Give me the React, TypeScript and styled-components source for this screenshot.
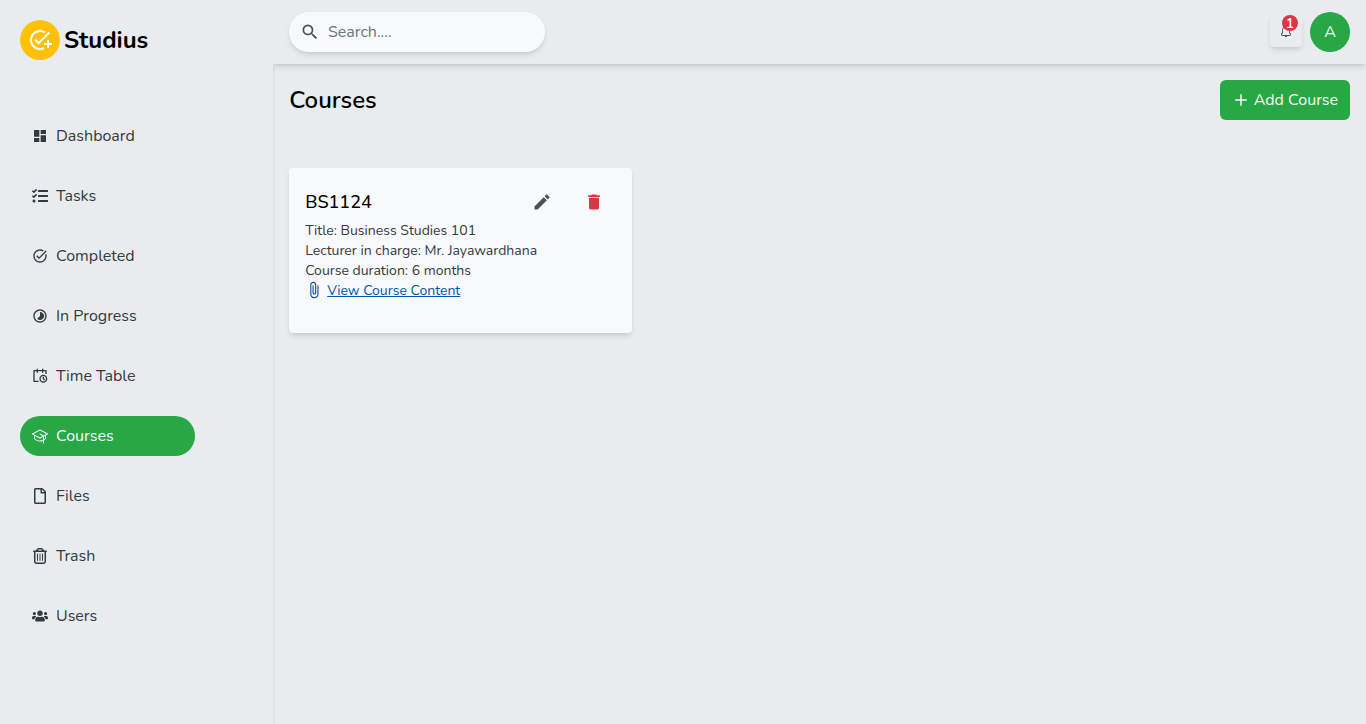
import React from "react";
import styled, { createGlobalStyle } from "styled-components";
import { MdOutlineAddTask, MdTaskAlt, MdTimelapse, MdAttachFile, MdDashboard, MdSearch, MdEdit, MdDelete } from "react-icons/md";
import { FaTasks, FaUsers, FaRegFile } from "react-icons/fa";
import { FaRegTrashCan } from "react-icons/fa6";
import { RiCalendarScheduleLine } from "react-icons/ri";
import { PiGraduationCap } from "react-icons/pi";
import { CiBellOn } from "react-icons/ci";
import { FiPlus } from "react-icons/fi";

const color = {
  surface: "#e9ecef",
  card: "#f8f9fa",
  text: "#343a40",
  muted: "#6c757d",
  green: "#28a745",
  red: "#dc3545",
  yellow: "#ffc107",
  link: "#0056b3",
};

const shadow = "0 4px 6px -1px rgba(0, 0, 0, 0.1), 0 2px 4px -2px rgba(0, 0, 0, 0.1)";

const GlobalStyle = createGlobalStyle`
  *, *::before, *::after { box-sizing: border-box; }
  body {
    margin: 0;
    background: ${color.surface};
    color: ${color.text};
    font-family: Nunito, Lato, sans-serif;
    font-size: 16px;
    line-height: 24px;
  }
  button, input { font: inherit; border: 0; padding: 0; background: none; }
  svg { display: block; flex: none; }
`;

const Page = styled.div`
  display: grid;
  grid-template-columns: 20% 1fr;
  height: 724px;
  overflow: hidden;
`;

const Sidebar = styled.aside`
  position: relative;
  padding: 20px;
  background: ${color.surface};
  box-shadow: ${shadow};
`;

const Brand = styled.div`
  display: flex;
  align-items: center;
  gap: 4px;
  height: 40px;
`;

const BrandMark = styled.div`
  display: grid;
  place-items: center;
  width: 40px;
  height: 40px;
  border-radius: 50%;
  background: ${color.yellow};
  color: #fff;
`;

const BrandName = styled.span`
  color: #000;
  font-size: 24px;
  font-weight: 700;
  line-height: 32px;
`;

const Menu = styled.nav`
  display: flex;
  flex-direction: column;
  gap: 20px;
  width: 175px;
  margin-top: 56px;
`;

const MenuItem = styled.a<{ $active?: boolean }>`
  display: flex;
  align-items: center;
  gap: 8px;
  height: 40px;
  padding: 0 12px;
  border-radius: 20px;
  background: ${(p) => (p.$active ? color.green : "transparent")};
  color: ${(p) => (p.$active ? color.card : color.text)};
`;

const Main = styled.div`
  position: relative;
  display: flex;
  flex-direction: column;
  min-width: 0;
  overflow: hidden;
  z-index: 0;
`;

const Header = styled.header`
  position: relative;
  display: flex;
  align-items: center;
  justify-content: space-between;
  height: 64px;
  padding: 0 16px;
  background: ${color.surface};
  box-shadow: ${shadow};
`;

const SearchBox = styled.label`
  display: flex;
  align-items: center;
  gap: 7.5px;
  width: 256px;
  height: 40px;
  padding: 0 11.3px;
  border-radius: 20px;
  background: ${color.card};
  color: #495057;
  box-shadow: ${shadow};
`;

const SearchInput = styled.input`
  flex: 1;
  min-width: 0;
  outline: none;
  &::placeholder { color: ${color.muted}; opacity: 1; }
`;

const Actions = styled.div`
  display: flex;
  align-items: center;
  gap: 8px;
`;

const BellButton = styled.button`
  position: relative;
  display: grid;
  place-items: center;
  width: 32px;
  height: 32px;
  margin-top: -2px;
  border-radius: 4px;
  color: #212529;
  box-shadow: ${shadow};
`;

const Badge = styled.span`
  position: absolute;
  top: 0;
  right: 4px;
  width: 16px;
  height: 16px;
  border-radius: 50%;
  background: ${color.red};
  color: #fff;
  font-size: 14px;
  font-weight: 600;
  line-height: 18px;
  text-align: center;
`;

const Avatar = styled.div`
  width: 40px;
  height: 40px;
  border-radius: 50%;
  background: ${color.green};
  color: ${color.card};
  line-height: 40px;
  text-align: center;
`;

const Content = styled.main`
  padding: 16px;
`;

const TitleRow = styled.div`
  display: flex;
  align-items: center;
  justify-content: space-between;
`;

const Title = styled.h1`
  margin: 0;
  color: #000;
  font-size: 24px;
  font-weight: 600;
  line-height: 32px;
`;

const AddButton = styled.button`
  display: flex;
  align-items: center;
  gap: 4px;
  height: 40px;
  padding: 0 12px;
  border-radius: 6px;
  background: ${color.green};
  color: ${color.card};
  white-space: nowrap;
`;

const Card = styled.article`
  width: 343px;
  height: 165px;
  margin-top: 48px;
  padding: 16px;
  border-radius: 4px;
  background: ${color.card};
  box-shadow: ${shadow};
`;

const CardHead = styled.div`
  display: flex;
  align-items: center;
  height: 36px;
  margin: 0 -4px 1px 0;
`;

const CourseCode = styled.h2`
  flex: 1;
  margin: 0;
  color: #000;
  font-size: 18px;
  font-weight: 500;
`;

const IconButton = styled.button<{ $danger?: boolean }>`
  padding: 0 16px;
  color: ${(p) => (p.$danger ? color.red : "#495057")};
`;

const Detail = styled.p`
  margin: 0;
  font-size: 14px;
  line-height: 20px;
`;

const ContentLink = styled.a`
  display: flex;
  align-items: flex-start;
  gap: 4px;
  color: ${color.link};
  font-size: 14px;
  line-height: 20px;
  text-decoration: underline;
`;

const menu = [
  { label: "Dashboard", Icon: MdDashboard },
  { label: "Tasks", Icon: FaTasks },
  { label: "Completed", Icon: MdTaskAlt },
  { label: "In Progress", Icon: MdTimelapse },
  { label: "Time Table", Icon: RiCalendarScheduleLine },
  { label: "Courses", Icon: PiGraduationCap, active: true },
  { label: "Files", Icon: FaRegFile },
  { label: "Trash", Icon: FaRegTrashCan },
  { label: "Users", Icon: FaUsers },
];

export default function App() {
  return (
    <>
      <GlobalStyle />
      <Page>
        <Sidebar>
          <Brand>
            <BrandMark><MdOutlineAddTask size={24} /></BrandMark>
            <BrandName>Studius</BrandName>
          </Brand>
          <Menu>
            {menu.map(({ label, Icon, active }) => (
              <MenuItem key={label} $active={active}>
                <Icon size={16} />
                <span>{label}</span>
              </MenuItem>
            ))}
          </Menu>
        </Sidebar>
        <Main>
          <Header>
            <SearchBox>
              <MdSearch size={20} />
              <SearchInput placeholder="Search...." />
            </SearchBox>
            <Actions>
              <BellButton aria-label="Notifications">
                <CiBellOn size={16} />
                <Badge>1</Badge>
              </BellButton>
              <Avatar>A</Avatar>
            </Actions>
          </Header>
          <Content>
            <TitleRow>
              <Title>Courses</Title>
              <AddButton><FiPlus size={18} /><span>Add Course</span></AddButton>
            </TitleRow>
            <Card>
              <CardHead>
                <CourseCode>BS1124</CourseCode>
                <IconButton aria-label="Edit"><MdEdit size={20} /></IconButton>
                <IconButton aria-label="Delete" $danger><MdDelete size={20} /></IconButton>
              </CardHead>
              <Detail>Title: Business Studies 101</Detail>
              <Detail>Lecturer in charge: Mr. Jayawardhana</Detail>
              <Detail>Course duration: 6 months</Detail>
              <ContentLink><MdAttachFile size={18} /><span>View Course Content</span></ContentLink>
            </Card>
          </Content>
        </Main>
      </Page>
    </>
  );
}
